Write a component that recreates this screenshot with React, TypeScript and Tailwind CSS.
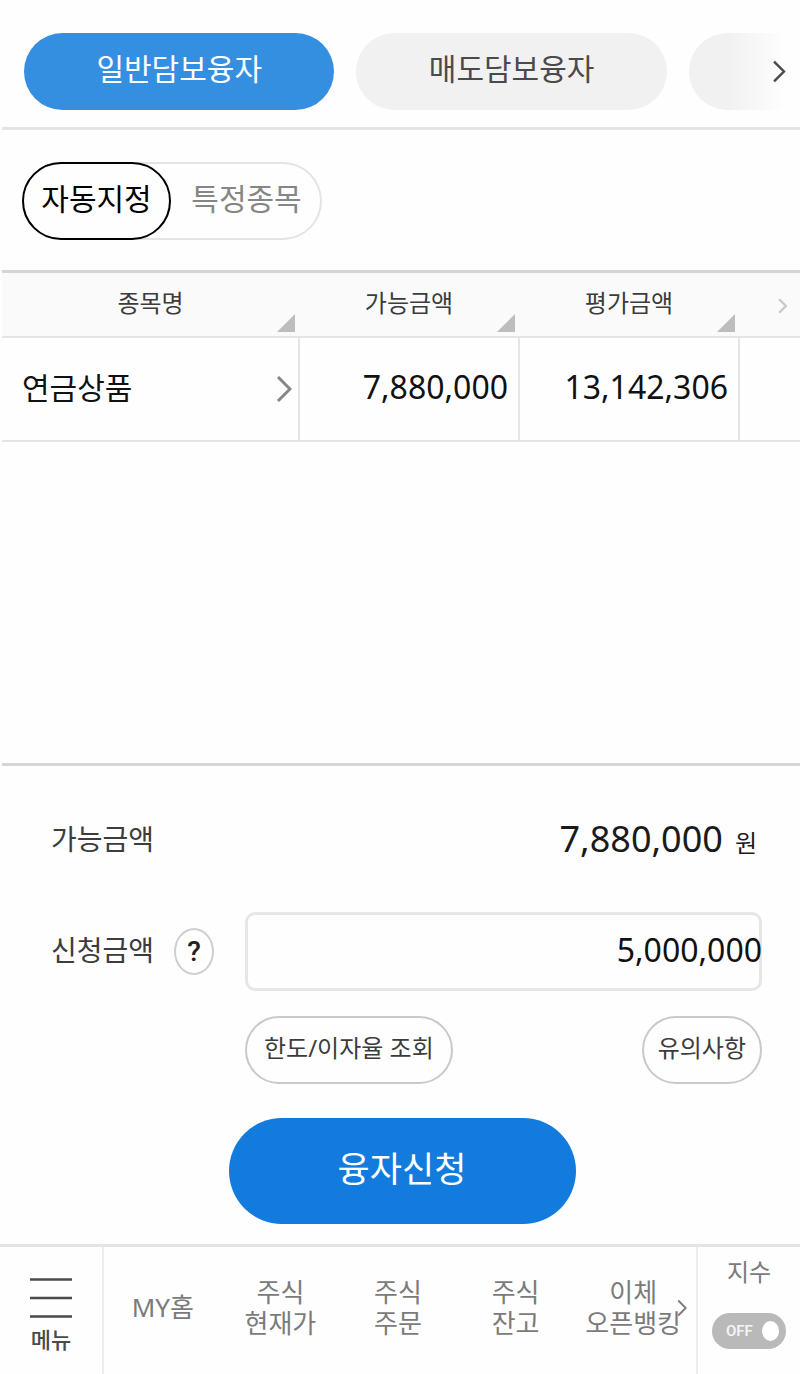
import { useState } from "react";

const LOAN_TABS = ["일반담보융자", "매도담보융자"];
const MODES = ["자동지정", "특정종목"];
const COLUMNS = ["종목명", "가능금액", "평가금액"];
const SHORTCUTS = [["MY홈"], ["주식", "현재가"], ["주식", "주문"], ["주식", "잔고"], ["이체", "오픈뱅킹"]];

function Chevron({ className, stroke }: { className: string; stroke: number }) {
  return (
    <svg viewBox="0 0 16 28" fill="none" stroke="currentColor" strokeWidth={stroke} className={className} aria-hidden="true">
      <path d="M2 2 L14 14 L2 26" />
    </svg>
  );
}

function LoanTabs() {
  const [active, setActive] = useState(0);
  return (
    <nav className="relative ml-[2px] overflow-hidden border-b-[3px] border-[#e4e4e4] pt-[33px] pb-[17px] pl-[22px]">
      <div className="flex gap-[22px]">
        {LOAN_TABS.map((label, i) => (
          <button
            key={label}
            type="button"
            onClick={() => setActive(i)}
            className={
              i === active
                ? "h-[77px] w-2/5 shrink-0 rounded-full bg-[#358fe1] pb-1.5 text-[30px] text-white"
                : "h-[77px] w-2/5 shrink-0 rounded-full bg-[#f1f1f1] pb-1.5 text-[30px] text-[#4a4a4a]"
            }
          >
            {label}
          </button>
        ))}
        <div className="h-[77px] w-2/5 shrink-0 rounded-full bg-[#f1f1f1]" />
      </div>
      <button
        type="button"
        aria-label="다음"
        className="absolute top-0 right-0 flex h-[126px] w-[90px] items-center justify-end bg-linear-to-r from-transparent from-20% to-[#fefefe] to-85% pt-[17px] pr-[14px] text-[#4a4a4a]"
      >
        <Chevron stroke={3} className="h-[23px] w-[14px]" />
      </button>
    </nav>
  );
}

function ModeSwitch() {
  const [mode, setMode] = useState(0);
  return (
    <div className="px-[22px] pt-[32px] pb-[30px]">
      <div className="flex h-[78px] w-[300px] rounded-full shadow-[inset_0_0_0_2px_#e4e4e4]">
        {MODES.map((label, i) => (
          <button
            key={label}
            type="button"
            aria-pressed={i === mode}
            onClick={() => setMode(i)}
            className={
              i === mode
                ? "w-[149px] rounded-full border-2 border-black bg-[#fefefe] pb-1.5 text-[30px] text-black"
                : "w-[151px] rounded-full border-2 border-transparent pb-1.5 text-[30px] text-[#868686]"
            }
          >
            {label}
          </button>
        ))}
      </div>
    </div>
  );
}

function HoldingsTable() {
  return (
    <div className="ml-[2px] flex-1 border-y-[3px] border-[#d4d5d9]">
      <table className="w-full table-fixed border-collapse">
        <colgroup>
          <col className="w-[297px]" />
          <col className="w-[220px]" />
          <col className="w-[220px]" />
          <col />
        </colgroup>
        <thead>
          <tr className="border-b-2 border-[#e4e4e4] bg-[#fafafa]">
            {COLUMNS.map((label) => (
              <th key={label} scope="col" className="p-0 font-normal">
                <button type="button" className="relative block h-[63px] w-full pb-[3px] text-2xl text-[#3c3c3c]">
                  {label}
                  <svg viewBox="0 0 18 18" className="absolute right-[4px] bottom-[4px] size-[18px]" aria-hidden="true">
                    <path d="M18 0 V18 H0 Z" fill="#bdbdbd" />
                  </svg>
                </button>
              </th>
            ))}
            <th className="p-0">
              <button type="button" aria-label="다음 열" className="flex h-[63px] w-full items-center justify-end pt-[2px] pr-[13px] text-[#c8c8c8]">
                <Chevron stroke={4} className="h-[16px] w-[9px]" />
              </button>
            </th>
          </tr>
        </thead>
        <tbody>
          <tr className="h-[104px] border-b-2 border-[#e4e4e4] text-[32px] text-[#111]">
            <td className="border-r-2 border-[#e4e4e4] p-0">
              <a href="#pension" className="flex items-center justify-between pr-[6px] pl-[20px] text-[30px]">
                <span className="pb-1">연금상품</span>
                <Chevron stroke={3} className="h-[28px] w-[16px] text-[#85868a]" />
              </a>
            </td>
            <td className="border-r-2 border-[#e4e4e4] p-0 pr-[10px] pb-1 text-right">7,880,000</td>
            <td className="border-r-2 border-[#e4e4e4] p-0 pr-[10px] pb-1 text-right">13,142,306</td>
            <td className="p-0" />
          </tr>
        </tbody>
      </table>
    </div>
  );
}

function LoanForm() {
  const [amount, setAmount] = useState("5,000,000");
  return (
    <form onSubmit={(e) => e.preventDefault()} className="pt-[38px] pr-[38px] pb-[20px] pl-[51px] text-[#3c3c3c]">
      <div className="flex h-[70px] items-center justify-between">
        <span className="text-[28px]">가능금액</span>
        <span className="flex items-baseline gap-3 pr-[5px] text-[#1a1a1a]">
          <span className="text-[36px]">7,880,000</span>
          <span className="text-2xl">원</span>
        </span>
      </div>
      <div className="mt-[38px] flex items-center">
        <div className="flex w-[194px] shrink-0 items-center gap-5">
          <label htmlFor="amount" className="pb-1 text-[28px]">
            신청금액
          </label>
          <button
            type="button"
            aria-label="도움말"
            className="flex h-[47px] w-[40px] items-center justify-center rounded-[50%] border-2 border-[#cfcfcf] font-['Roboto',sans-serif] text-[28px] font-medium text-[#222]"
          >
            ?
          </button>
        </div>
        <input
          id="amount"
          value={amount}
          onChange={(e) => setAmount(e.target.value)}
          inputMode="numeric"
          className="h-[79px] min-w-0 flex-1 rounded-[10px] bg-transparent pb-1 text-right text-[32px] text-[#111] shadow-[inset_0_0_0_3px_#e6e6e6] outline-none"
        />
      </div>
      <div className="mt-[25px] flex justify-between pl-[194px]">
        <button type="button" className="h-[68px] rounded-full border-2 border-[#c9c9c9] px-[17px] pb-1 text-2xl">
          한도/이자율 조회
        </button>
        <button type="button" className="h-[68px] rounded-full border-2 border-[#c9c9c9] px-[14px] pb-1 text-2xl">
          유의사항
        </button>
      </div>
      <div className="mt-[34px] flex justify-center pr-[9px]">
        <button type="submit" className="h-[106px] w-[347px] rounded-full bg-[#127bdd] pb-1 text-[35px] text-white">
          융자신청
        </button>
      </div>
    </form>
  );
}

function BottomBar() {
  const [on, setOn] = useState(false);
  return (
    <footer className="flex h-[130px] border-t-[3px] border-[#e4e4e4] text-[#7b7b7b]">
      <button type="button" className="flex w-[104px] shrink-0 flex-col items-center border-r-2 border-[#ececec] pt-[31px] text-[#4a4a4a]">
        <svg viewBox="0 0 42 40" className="h-[40px] w-[42px]" stroke="currentColor" strokeWidth="2.5" aria-hidden="true">
          <path d="M0 1.5 H42 M0 20 H42 M0 38.5 H42" />
        </svg>
        <span className="mt-[6px] text-[22px] leading-[30px] font-medium">메뉴</span>
      </button>
      <nav className="relative flex flex-1 pr-[4px]">
        {SHORTCUTS.map((lines) => (
          <a key={lines.join("")} href="#shortcut" className="flex flex-1 flex-col items-center justify-center pb-1.5 text-[26px] leading-[31px] whitespace-nowrap">
            {lines.map((line) => (
              <span key={line}>{line}</span>
            ))}
          </a>
        ))}
        <Chevron stroke={3} className="absolute top-[52px] right-[9px] h-[18px] w-[10px]" />
      </nav>
      <label className="flex w-[104px] shrink-0 flex-col items-center border-l-2 border-[#ececec] pt-[9px] text-2xl leading-[32px]">
        지수
        <span className="relative mt-[25px] flex h-[36px] w-[74px] items-center rounded-full bg-[#b9b9b9] pl-[14px]">
          <input
            type="checkbox"
            role="switch"
            checked={on}
            onChange={(e) => setOn(e.target.checked)}
            className="absolute inset-0 size-full cursor-pointer appearance-none rounded-full"
          />
          <span className="w-[36px] font-['Roboto',sans-serif] text-[15px] leading-[20px] font-semibold text-[#f4f4f4]">{on ? "ON" : "OFF"}</span>
          <span className="h-[20px] w-[17px] rounded-[50%] bg-white" />
        </span>
      </label>
    </footer>
  );
}

export default function App() {
  return (
    <main className="flex min-h-screen flex-col bg-[#fefefe] font-['Noto_Sans','Noto_Sans_CJK_KR',sans-serif]">
      <LoanTabs />
      <ModeSwitch />
      <HoldingsTable />
      <LoanForm />
      <BottomBar />
    </main>
  );
}
